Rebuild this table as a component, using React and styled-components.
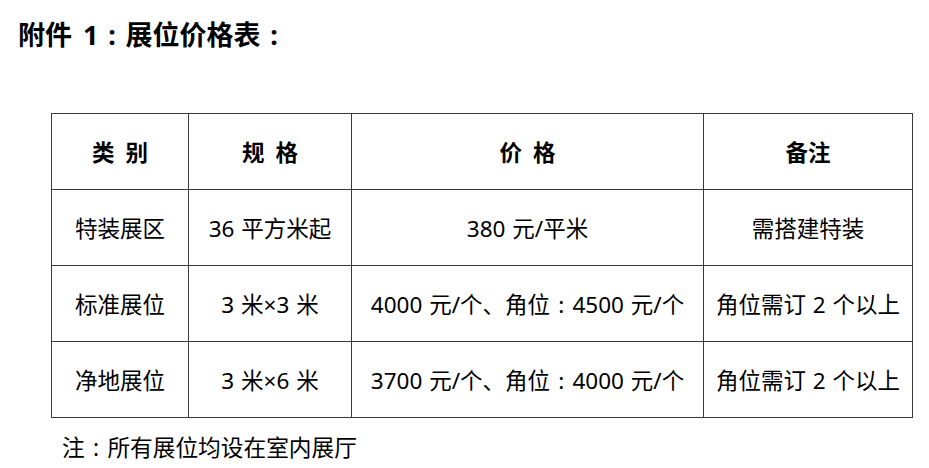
import React from "react";
import styled, { createGlobalStyle } from "styled-components";

const Global = createGlobalStyle`
  html, body { margin: 0; padding: 0; background: #fff; }
  body { font-family: "Noto Sans", "Noto Sans CJK SC", sans-serif; color: #000; }
`;

const Page = styled.div`
  width: 929px;
  height: 468px;
  overflow: hidden;
  display: flex;
  flex-direction: column;
`;

const Title = styled.h1`
  margin: 18px 0 0 18px;
  font-size: 27px;
  line-height: 34px;
  font-weight: 700;
  word-spacing: 4px;
`;

const Colon = styled.span`
  display: inline-block;
  width: 1em;
  text-align: center;
`;

const Table = styled.table`
  margin: 61px 0 0 51px;
  width: 861px;
  border-collapse: collapse;
  table-layout: fixed;
`;

const Th = styled.th`
  border: 1px solid #3a3a3a;
  height: 75px;
  padding: 0;
  font-size: 22.5px;
  font-weight: 700;
  text-align: center;
  vertical-align: middle;
  word-spacing: 5px;
`;

const Td = styled.td`
  border: 1px solid #3a3a3a;
  height: 75px;
  padding: 0;
  font-size: 22.5px;
  font-weight: 400;
  text-align: center;
  vertical-align: middle;
  white-space: nowrap;
  word-spacing: 1px;
`;

const Note = styled.p`
  margin: 15px 0 0 62px;
  font-size: 22.7px;
  line-height: 30px;
`;

function Txt({ children }) {
  const parts = String(children).split("：");
  return parts.map((p, i) => (
    <React.Fragment key={i}>
      {p}
      {i < parts.length - 1 && <Colon>:</Colon>}
    </React.Fragment>
  ));
}

const cols = [137, 163, 352, 209];
const headers = ["类 别", "规 格", "价 格", "备注"];
const rows = [
  ["特装展区", "36 平方米起", "380 元/平米", "需搭建特装"],
  ["标准展位", "3 米×3 米", "4000 元/个、角位：4500 元/个", "角位需订 2 个以上"],
  ["净地展位", "3 米×6 米", "3700 元/个、角位：4000 元/个", "角位需订 2 个以上"],
];

export default function App() {
  return (
    <>
      <Global />
      <Page>
        <Title>
          <Txt>附件 1：展位价格表：</Txt>
        </Title>
        <Table>
          <colgroup>
            {cols.map((w, i) => (
              <col key={i} style={{ width: w }} />
            ))}
          </colgroup>
          <thead>
            <tr>
              {headers.map((h) => (
                <Th key={h}>{h}</Th>
              ))}
            </tr>
          </thead>
          <tbody>
            {rows.map((r, i) => (
              <tr key={i}>
                {r.map((c, j) => (
                  <Td key={j}>
                    <Txt>{c}</Txt>
                  </Td>
                ))}
              </tr>
            ))}
          </tbody>
        </Table>
        <Note>
          <Txt>注：所有展位均设在室内展厅</Txt>
        </Note>
      </Page>
    </>
  );
}
